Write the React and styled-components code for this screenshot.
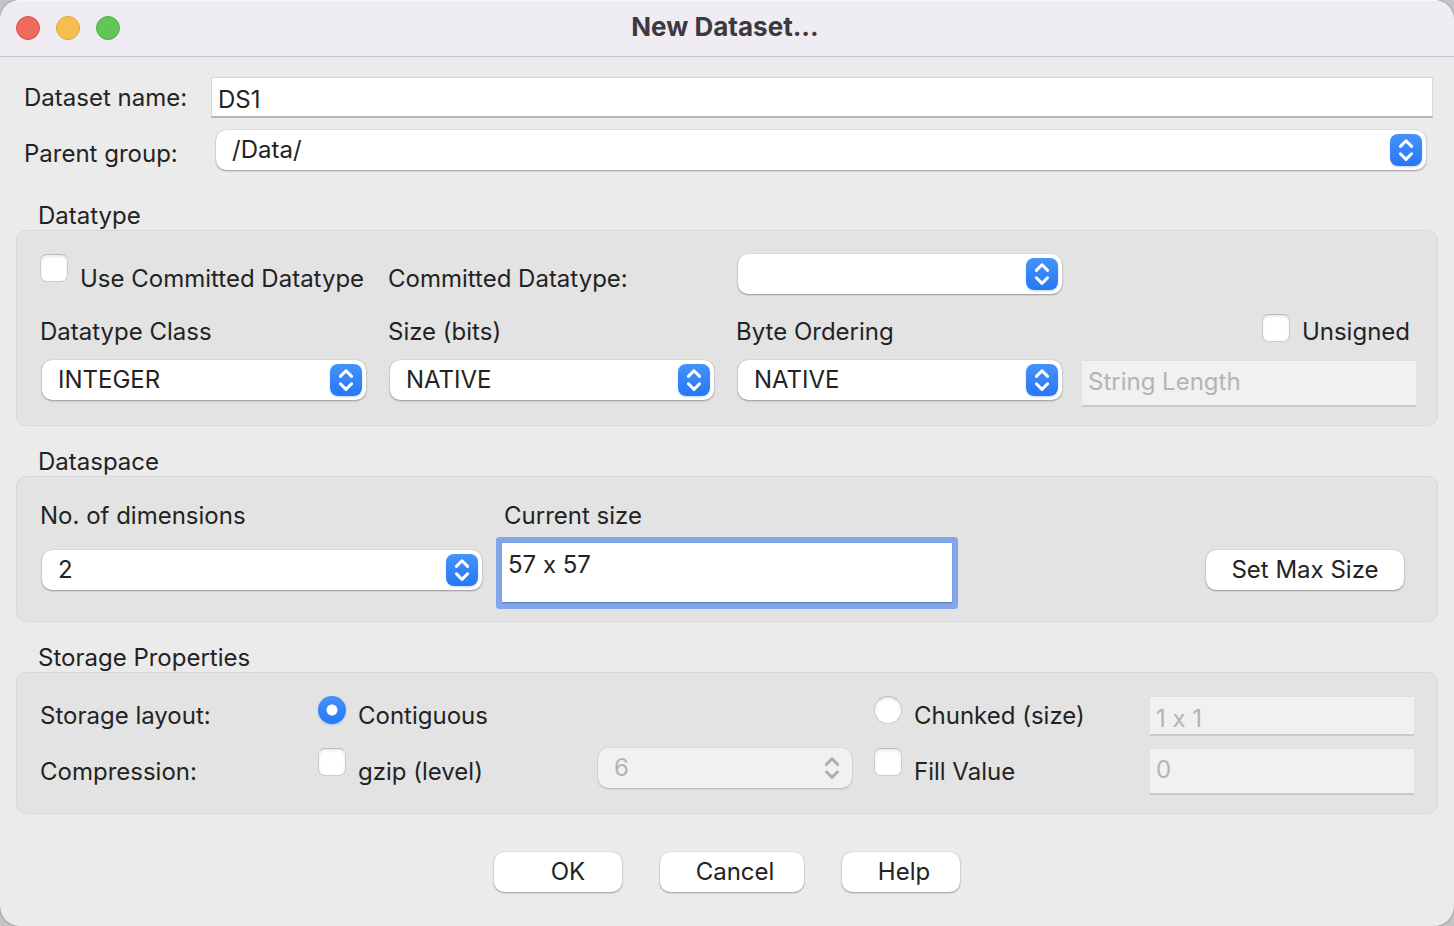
import React from "react";
import styled, { createGlobalStyle } from "styled-components";

const GlobalStyle = createGlobalStyle`
  *, *::before, *::after { box-sizing: border-box; }
  body { margin: 0; background: #c4c4c6; }
  body, input, select, textarea, button {
    font-family: Inter, Roboto, "Liberation Sans", sans-serif;
    font-size: 24px;
    line-height: 30px;
    font-variant-ligatures: no-contextual;
    color: #232323;
  }
`;

const Window = styled.div`
  min-height: 100vh;
  overflow: hidden;
  border-radius: 20px;
  background: #ebebeb;
  box-shadow: 0 0 2px rgba(0, 0, 0, 0.5);
`;

const TitleBar = styled.header`
  position: relative;
  display: flex;
  align-items: center;
  justify-content: center;
  height: 57px;
  padding-bottom: 4px;
  background: #efecf3;
  border-top: 1px solid #f8f7fa;
  border-bottom: 1px solid #c8c6ca;
`;

const TrafficLights = styled.div`
  position: absolute;
  left: 16px;
  top: 15px;
  display: flex;
  gap: 16px;
`;

const Light = styled.button`
  width: 24px;
  height: 24px;
  padding: 0;
  border: 1px solid ${(p) => p.$edge};
  border-radius: 50%;
  background: ${(p) => p.$fill};
`;

const Title = styled.h1`
  margin: 0;
  padding-right: 4px;
  font-size: 26px;
  line-height: 30px;
  font-weight: 700;
  color: #3c3a3e;
`;

const Form = styled.form`
  display: flex;
  flex-direction: column;
  gap: 20px;
  padding: 20px 16px 34px;
`;

const Label = styled.label`
  align-self: center;
  padding-left: ${(p) => (p.$inset ? 2 : 0)}px;
  white-space: nowrap;
`;

const Text = styled(Label).attrs({ as: "span" })``;

const Group = styled.fieldset`
  min-width: 0;
  margin: 0;
  padding: 0;
  border: 0;
`;

const GroupTitle = styled.legend`
  padding: 2px 0 0 22px;
  line-height: 28px;
`;

const Panel = styled.div`
  display: grid;
  grid-template-columns: repeat(${(p) => p.$columns}, minmax(0, 1fr));
  grid-template-rows: ${(p) => p.$rows};
  column-gap: 14px;
  row-gap: ${(p) => p.$rowGap}px;
  padding: 23px ${(p) => p.$right || 21}px 18px 21px;
  border: 1px solid #d8d8d8;
  border-radius: 10px;
  background: #e3e3e3;
`;

const raised = `
  border: 0;
  border-radius: 10px;
  box-shadow: 0 0 1px rgba(0, 0, 0, 0.3), 0 1px 2px rgba(0, 0, 0, 0.32);
`;

const SelectBox = styled.div`
  position: relative;
  align-self: ${(p) => p.$align || "start"};
  margin: 0 6px 0 4px;
`;

const NameGrid = styled.div`
  display: grid;
  grid-template-columns: 187px 1fr;
  grid-template-rows: 41px 48px;
  row-gap: 12px;
  margin: 0 5px 2px 8px;

  ${SelectBox} {
    margin: 0 7px 0 5px;
  }
`;

const SelectControl = styled.select`
  ${raised}
  display: block;
  appearance: none;
  width: 100%;
  height: 40px;
  padding: 0 44px 0 16px;
  background: #fff;
  &:disabled {
    color: #b4b4b4;
    background: #f1f1f1;
    opacity: 1;
    box-shadow: 0 0 1px rgba(0, 0, 0, 0.2), 0 1px 2px rgba(0, 0, 0, 0.2);
  }
`;

const Stepper = styled.svg`
  position: absolute;
  top: 4px;
  right: 4px;
  width: 32px;
  height: 32px;
  border-radius: 8px;
  pointer-events: none;
  color: ${(p) => (p.$disabled ? "#b0b0b0" : "#fff")};
  background: ${(p) => (p.$disabled ? "none" : "linear-gradient(#4593f8, #2777f6)")};
  box-shadow: ${(p) => (p.$disabled ? "none" : "0 1px 2px rgba(39, 119, 246, 0.3)")};
`;

function Select({ id, value, disabled, align, ...rest }) {
  return (
    <SelectBox $align={align}>
      <SelectControl id={id} disabled={disabled} defaultValue={value} {...rest}>
        <option value={value}>{value}</option>
      </SelectControl>
      <Stepper $disabled={disabled} viewBox="0 0 32 32" aria-hidden="true">
        <path
          d="M10.4 12.4 16 6.8l5.6 5.6M10.4 19.8l5.6 5.6 5.6-5.6"
          fill="none"
          stroke="currentColor"
          strokeWidth="3"
          strokeLinecap="round"
          strokeLinejoin="round"
        />
      </Stepper>
    </SelectBox>
  );
}

const TextField = styled.input`
  width: 100%;
  min-width: 0;
  height: 100%;
  padding: ${(p) => (p.$tall ? "0 6px 3px" : "5px 6px 0")};
  border: 1px solid #d6d6d6;
  border-bottom: 2px solid #b5b5b5;
  border-radius: 0;
  background: #fff;
  &:disabled {
    color: #b4b4b4;
    background: #f1f1f1;
    border-width: 1px 0 2px;
    border-color: #dedede;
    border-bottom-color: #c9c9c9;
  }
`;

const SizeArea = styled.textarea`
  display: block;
  width: 100%;
  height: 60px;
  padding: 7px 6px;
  border: 0;
  border-bottom: 1px solid #6289d0;
  border-radius: 0;
  outline: 0;
  resize: none;
  background: #fff;
`;

const FocusRing = styled.div`
  align-self: end;
  border-radius: 1px;
  box-shadow: 0 0 0 1px #769fe6, 0 0 0 6px #82a6e8;
`;

const CheckLabel = styled.label`
  display: flex;
  gap: 12px;
  justify-content: ${(p) => (p.$end ? "flex-end" : "flex-start")};
  padding: 0 ${(p) => (p.$end ? 6 : 0)}px 0 2px;
  white-space: nowrap;
`;

const CheckText = styled.span`
  align-self: center;
`;

const Tick = styled.input`
  appearance: none;
  flex: none;
  width: 28px;
  height: 28px;
  margin: 0;
  border: 1px solid #cbcbcb;
  border-top-color: #b9b9b9;
  border-radius: ${(p) => (p.type === "radio" ? "50%" : "7px")};
  background: #fff;
  box-shadow: inset 0 2px 3px rgba(0, 0, 0, 0.08);
  &:checked {
    border: 0;
    background: radial-gradient(circle, #fff 0 5px, transparent 6px),
      linear-gradient(#4593f8, #2777f6);
    box-shadow: 0 1px 2px rgba(39, 119, 246, 0.35);
  }
`;

function Check({ children, end, type = "checkbox", ...rest }) {
  return (
    <CheckLabel $end={end}>
      <Tick type={type} {...rest} />
      <CheckText>{children}</CheckText>
    </CheckLabel>
  );
}

const PushButton = styled.button`
  ${raised}
  height: 40px;
  min-width: ${(p) => p.$width}px;
  padding: 0 0 0 ${(p) => p.$lead || 0}px;
  background: #fff;
`;

const MaxSizeCell = styled.div`
  align-self: center;
  display: flex;
  justify-content: flex-end;
  padding-right: 12px;
`;

const Actions = styled.footer`
  display: flex;
  justify-content: center;
  gap: 38px;
  padding-top: 18px;
`;

export default function App() {
  return (
    <>
      <GlobalStyle />
      <Window>
        <TitleBar>
          <TrafficLights>
            <Light type="button" aria-label="Close" $fill="#ee6a5f" $edge="#dc5148" />
            <Light type="button" aria-label="Minimize" $fill="#f5bf4f" $edge="#dfa53a" />
            <Light type="button" aria-label="Zoom" $fill="#62c555" $edge="#4fae43" />
          </TrafficLights>
          <Title>New Dataset...</Title>
        </TitleBar>
        <Form onSubmit={(e) => e.preventDefault()}>
          <NameGrid>
            <Label htmlFor="name">Dataset name:</Label>
            <TextField id="name" defaultValue="DS1" />
            <Label htmlFor="parent">Parent group:</Label>
            <Select id="parent" value="/Data/" />
          </NameGrid>

          <Group>
            <GroupTitle>Datatype</GroupTitle>
            <Panel $columns={4} $rows="50px 36px 47px" $rowGap={10}>
              <Check>Use Committed Datatype</Check>
              <Label $inset htmlFor="committed">Committed Datatype:</Label>
              <Select id="committed" value="" />
              <span />
              <Label $inset htmlFor="class">Datatype Class</Label>
              <Label $inset htmlFor="bits">Size (bits)</Label>
              <Label $inset htmlFor="order">Byte Ordering</Label>
              <Check end>Unsigned</Check>
              <Select id="class" value="INTEGER" />
              <Select id="bits" value="NATIVE" />
              <Select id="order" value="NATIVE" />
              <TextField disabled $tall aria-label="String Length" defaultValue="String Length" />
            </Panel>
          </Group>

          <Group>
            <GroupTitle>Dataspace</GroupTitle>
            <Panel $columns={3} $rows="32px 66px" $rowGap={5}>
              <Label $inset htmlFor="dims">No. of dimensions</Label>
              <Label $inset htmlFor="size">Current size</Label>
              <span />
              <Select id="dims" value="2" align="center" />
              <FocusRing>
                <SizeArea id="size" defaultValue="57 x 57" />
              </FocusRing>
              <MaxSizeCell>
                <PushButton type="button" $width={198}>Set Max Size</PushButton>
              </MaxSizeCell>
            </Panel>
          </Group>

          <Group>
            <GroupTitle>Storage Properties</GroupTitle>
            <Panel $columns={5} $rows="40px 47px" $rowGap={12} $right={23}>
              <Text $inset>Storage layout:</Text>
              <Check type="radio" name="layout" defaultChecked>Contiguous</Check>
              <span />
              <Check type="radio" name="layout">Chunked (size)</Check>
              <TextField disabled aria-label="Chunk size" defaultValue="1 x 1" />
              <Text $inset>Compression:</Text>
              <Check>gzip (level)</Check>
              <Select disabled aria-label="gzip level" value="6" />
              <Check>Fill Value</Check>
              <TextField disabled $tall aria-label="Fill value" defaultValue="0" />
            </Panel>
          </Group>

          <Actions>
            <PushButton type="submit" $width={128} $lead={20}>OK</PushButton>
            <PushButton type="button" $width={144} $lead={6}>Cancel</PushButton>
            <PushButton type="button" $width={118} $lead={6}>Help</PushButton>
          </Actions>
        </Form>
      </Window>
    </>
  );
}
